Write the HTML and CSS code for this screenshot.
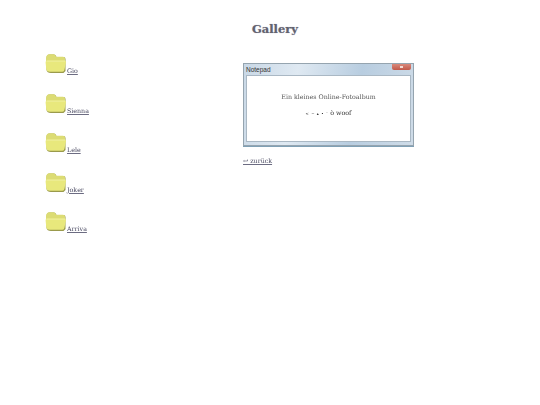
FILE: index.html
```html
<!DOCTYPE html>
<html lang="de">
<head>
<meta charset="utf-8">
<title>Gallery</title>
<link rel="stylesheet" href="styles.css">
</head>
<body>
<h1 class="title">Gallery</h1>
<main class="layout">
  <ul class="folders">
    <li class="folder"><svg class="folder-icon" viewBox="0 0 22 20"><use href="#f"/></svg><a href="#">Gio</a></li>
    <li class="folder"><svg class="folder-icon" viewBox="0 0 22 20"><use href="#f"/></svg><a href="#">Sienna</a></li>
    <li class="folder"><svg class="folder-icon" viewBox="0 0 22 20"><use href="#f"/></svg><a href="#">Lele</a></li>
    <li class="folder"><svg class="folder-icon" viewBox="0 0 22 20"><use href="#f"/></svg><a href="#">Joker</a></li>
    <li class="folder"><svg class="folder-icon" viewBox="0 0 22 20"><use href="#f"/></svg><a href="#">Arriva</a></li>
  </ul>
  <section class="side">
    <div class="window">
      <div class="titlebar"><span>Notepad</span><span class="close"><span class="close-x"></span></span></div>
      <div class="content">
        <p class="line">Ein kleines Online-Fotoalbum</p>
        <p class="line woof"><span class="tiny">&lt; ~ ▴ • ¨</span> ò woof</p>
      </div>
    </div>
    <a class="back" href="#">↩ zurück</a>
  </section>
</main>
<svg class="defs" width="0" height="0" aria-hidden="true">
  <defs>
    <g id="f">
      <path d="M1.500 4Q1.500 .5 4.500 .5H9Q10.500 .5 11 2L11.500 3H18.500Q20.500 3 20.500 5V17L18.500 19H6Q2 19 1.500 16Z" fill="#9a9a4c"/>
      <path d="M1 5Q1 .5 4.500 .3H8.500Q10.300 .3 10.800 2L11 2.700H18Q20 2.700 20 4.500V8H1Z" fill="#dcdc74"/>
      <path d="M.6 8.500Q.6 6.500 2 6.500H19.500Q21.200 6.500 21 8L19.500 15.500Q19.200 17.800 17.300 17.800H4.500Q1.800 17.800 1.300 15.500Z" fill="#e8e87c"/>
      <path d="M1.500 7.100H20" stroke="#f4f4b0" stroke-width=".7" fill="none"/>
    </g>
  </defs>
</svg>
</body>
</html>
```
FILE: styles.css
```css
* { box-sizing: border-box; }
html, body { margin: 0; height: 100%; background: #fff; }
body {
  font-family: "DejaVu Serif", serif;
  font-size: 6.300px;
  color: #333;
  overflow: hidden;
}
a { color: #44447a; text-decoration-color: #6a6a9a; filter: saturate(.45); }
.title {
  margin: 0;
  padding: 21px 0 0 10px;
  height: 53px;
  text-align: center;
  font-size: 11.500px;
  line-height: 17px;
  font-weight: bold;
  color: #62626e;
  text-shadow: 0 0 1px #a6a6bc;
}
.layout {
  display: grid;
  grid-template-columns: 243px 171px;
}
.folders {
  list-style: none;
  margin: 0;
  padding: 0 0 0 45px;
  display: flex;
  flex-direction: column;
  gap: 18.600px;
}
.folder {
  display: flex;
  align-items: flex-end;
  height: 21px;
  line-height: 9px;
}
.folder a { margin-bottom: -1px; }
.folder-icon { width: 22px; height: 20px; display: block; }
.side { padding-top: 10px; }
.window {
  width: 171px;
  height: 83px;
  border: 1px solid #95a4af;
  background: linear-gradient(100deg, #c9d8e6 0%, #dfe9f2 30%, #b8cde0 65%, #cfdce8 100%);
  padding: 0 2px 3px;
  display: flex;
  flex-direction: column;
  box-shadow: 0 1px 0 #7fa0b5;
}
.titlebar {
  height: 11px;
  flex: none;
  display: flex;
  justify-content: space-between;
  align-items: center;
  font-family: "Liberation Sans", sans-serif;
  font-size: 6.500px;
  color: #333;
}
.close {
  width: 19px;
  height: 6px;
  margin: -5px 0 0 0;
  border-radius: 0 0 2px 2px;
  background: linear-gradient(#d98a7c, #c2594a);
  display: flex;
  justify-content: center;
  align-items: center;
}
.close-x { width: 3px; height: 2px; background: #f3dcd6; }
.content {
  flex: 1;
  background: #fff;
  border: 1px solid #aab8c4;
  padding-top: 16px;
  text-align: center;
}
.line { margin: 0 0 7px; line-height: 9px; font-size: 6.300px; color: #555; filter: grayscale(.85); }
.woof { color: #333; }
.tiny { font-size: 4px; letter-spacing: .5px; }
.back { display: inline-block; margin-top: 10px; line-height: 9px; }
.defs { position: absolute; }
```
